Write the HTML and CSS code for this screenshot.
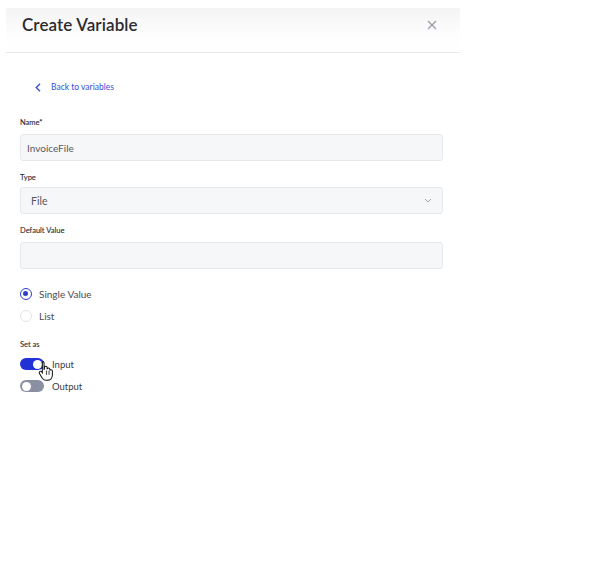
FILE: index.html
```html
<!DOCTYPE html>
<html>
<head>
<meta charset="utf-8">
<link rel="stylesheet" href="styles.css">
</head>
<body>
<div class="panel">
  <div class="header">
    <h1 class="title">Create Variable</h1>
    <svg class="close" width="10" height="10" viewBox="0 0 10 10"><path d="M1 1L9 9M9 1L1 9" stroke="#9b9cab" stroke-width="1.3" fill="none"/></svg>
  </div>
  <div class="body">
    <a class="back">
      <svg width="6" height="9" viewBox="0 0 6 9"><path d="M5 0.8L1.3 4.5L5 8.2" stroke="#3550d8" stroke-width="1.4" fill="none"/></svg>
      <span>Back to variables</span>
    </a>
    <div class="field first">
      <div class="label">Name*</div>
      <div class="input"><span class="value">InvoiceFile</span></div>
    </div>
    <div class="field tight">
      <div class="label">Type</div>
      <div class="input select"><span class="value sel">File</span>
        <svg width="8" height="5" viewBox="0 0 8 5"><path d="M1 1L4 4L7 1" stroke="#a0a2ad" stroke-width="1" fill="none"/></svg>
      </div>
    </div>
    <div class="field">
      <div class="label">Default Value</div>
      <div class="input"></div>
    </div>
    <div class="radios">
      <div class="radio"><span class="dot on"></span><span>Single Value</span></div>
      <div class="radio"><span class="dot"></span><span>List</span></div>
    </div>
    <div class="setas">
      <div class="label">Set as</div>
      <div class="toggle-row"><span class="toggle on"><span class="knob"></span></span><span>Input</span></div>
      <div class="toggle-row"><span class="toggle"><span class="knob"></span></span><span>Output</span></div>
      <svg class="cursor" width="16" height="21" viewBox="0 0 14 18">
        <path d="M4 1.2c.8 0 1.3.6 1.3 1.3V8l.3-.1V6.4c0-.7.5-1.2 1.2-1.2s1.2.5 1.2 1.2v1.4c.1-.6.6-1 1.2-1 .7 0 1.2.5 1.2 1.2v.9c.2-.4.6-.6 1-.6.7 0 1.2.5 1.2 1.2v3.5c0 2.6-1.8 4.6-4.4 4.6H7.1c-1.3 0-2.4-.6-3.2-1.6L1.3 11.6c-.4-.6-.3-1.3.2-1.7.5-.4 1.2-.3 1.6.2l.7.9V2.5c0-.7.4-1.3 1.2-1.3z" fill="#fff" stroke="#111" stroke-width="0.9"/>
        <path d="M7.5 9v3.8M9.7 9.2v3.6" stroke="#111" stroke-width=".7"/>
      </svg>
    </div>
  </div>
</div>
</body>
</html>
```
FILE: styles.css
```css
* { box-sizing: border-box; }
body {
  margin: 0;
  width: 610px;
  height: 580px;
  background: #fff;
  font-family: Lato, "Noto Sans", sans-serif;
  color: #2c2c34;
}
.panel {
  width: 460px;
  padding-top: 8px;
}
.header {
  margin-left: 6px;
  height: 45px;
  display: flex;
  align-items: flex-start;
  justify-content: space-between;
  padding: 7px 23px 0 16px;
  background: linear-gradient(#f4f4f5, #fdfdfd 60%, #fff);
  border-bottom: 1px solid #e9e9ec;
}
.title {
  margin: 0;
  font-size: 17px;
  line-height: 20px;
  font-weight: 600;
  color: #2b2b30;
  letter-spacing: 0.1px;
}
.close { display: block; margin-top: 5px; }
.body {
  padding: 28px 17px 0 20px;
}
.back {
  display: flex;
  align-items: center;
  gap: 10px;
  margin-left: 15px;
  font-size: 8.5px;
  color: #3550d8;
  height: 12px;
}
.field { margin-top: 12px; }
.field.first { margin-top: 25px; }
.label {
  font-size: 7.5px;
  font-weight: 400;
  color: #2a2b32;
  height: 10px;
  line-height: 10px;
  -webkit-text-stroke: 0.1px #2a2b32;
}
.input {
  margin-top: 6px;
  height: 27px;
  background: #f6f7f9;
  border: 1px solid #e7e8ec;
  border-radius: 3px;
  display: flex;
  align-items: center;
  justify-content: space-between;
  padding: 0 10px 0 6px;
}
.field.tight .input { margin-top: 4px; }
.value { font-size: 10px; color: #56575f; }
.value.sel { margin-left: 4px; font-size: 10.5px; }
.radios {
  margin-top: 18px;
  display: flex;
  flex-direction: column;
  gap: 9px;
}
.radio {
  display: flex;
  align-items: center;
  gap: 7px;
  font-size: 10px;
  color: #4a4b53;
  height: 13px;
}
.dot {
  width: 12px;
  height: 12px;
  border-radius: 50%;
  border: 1px solid #e3e4e8;
  background: #fff;
  position: relative;
}
.dot.on { border: 1.3px solid #2e3fd0; }
.dot.on::after {
  content: "";
  position: absolute;
  left: 2.2px; top: 2.2px;
  width: 5.2px; height: 5.2px;
  border-radius: 50%;
  background: #2e3fd0;
}
.setas {
  margin-top: 18px;
  position: relative;
}
.toggle-row {
  display: flex;
  align-items: center;
  gap: 8px;
  font-size: 9.5px;
  color: #3a3b43;
  height: 12px;
  margin-top: 10px;
}
.setas .label + .toggle-row { margin-top: 8px; }
.toggle {
  width: 24px;
  height: 12px;
  border-radius: 6px;
  background: #8a8fa2;
  position: relative;
}
.toggle.on { background: #2131d6; }
.knob {
  position: absolute;
  top: 1.5px;
  left: 2px;
  width: 9px;
  height: 9px;
  border-radius: 50%;
  background: #fff;
}
.toggle.on .knob { left: 13px; }
.cursor {
  position: absolute;
  left: 18px;
  top: 20px;
}
```
